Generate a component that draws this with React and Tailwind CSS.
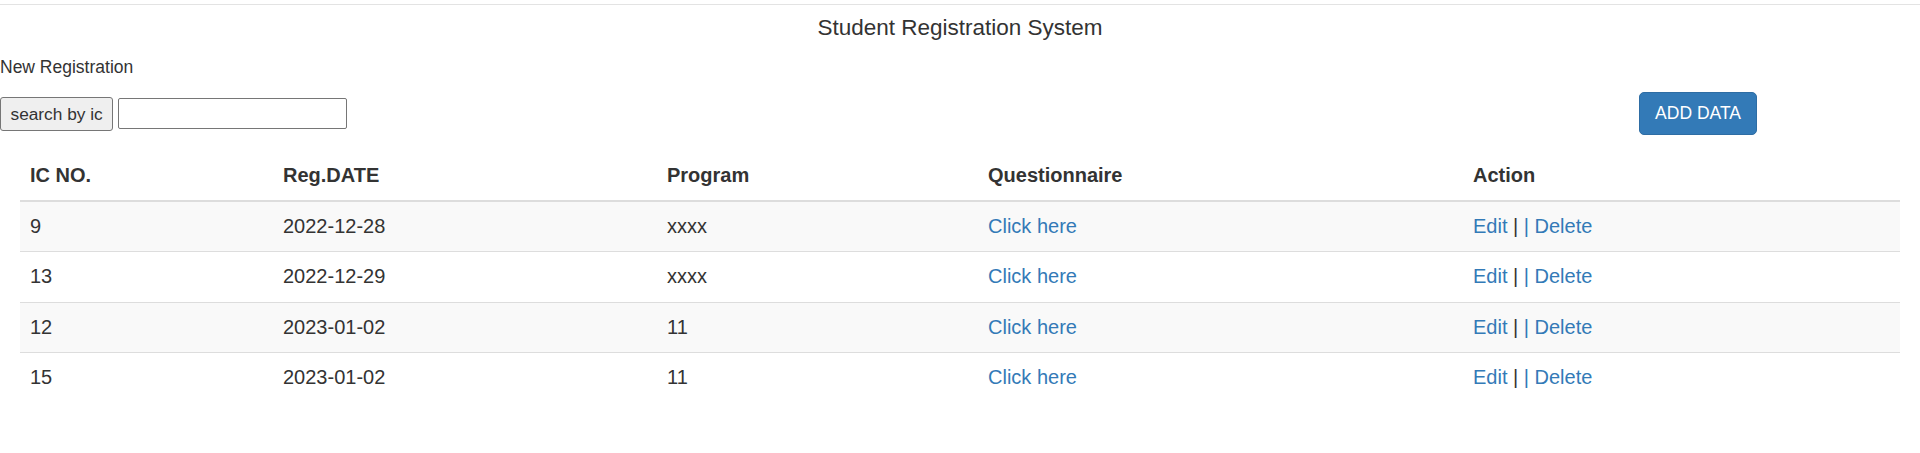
import React from 'react';

const rows = [
  { ic: '9', date: '2022-12-28', program: 'xxxx' },
  { ic: '13', date: '2022-12-29', program: 'xxxx' },
  { ic: '12', date: '2023-01-02', program: '11' },
  { ic: '15', date: '2023-01-02', program: '11' },
];

function App() {
  return (
    <div className="min-h-screen bg-white text-[#333] font-['Liberation_Sans',Arial,sans-serif]">
      <div className="pt-[4px]">
        <hr className="border-0 border-t border-[#e3e3e3]" />
      </div>

      <h3 className="mt-[10px] text-center text-[22.5px] leading-[25px]">Student Registration System</h3>

      <p className="mt-[15px] text-[17.5px] leading-[25px]">New Registration</p>

      <div className="mt-[12px] flex items-center">
        <button className="h-[34px] px-[9.5px] text-[17.3px] leading-[20px] bg-[#efefef] border border-[#767676] rounded-[3px]">
          search by ic
        </button>
        <input className="ml-[5px] h-[31px] w-[229px] px-1 border border-[#767676] rounded-[2px] bg-white" />
        <button className="ml-auto mr-[163px] h-[43px] px-[15px] text-[17.5px] leading-[25px] text-white bg-[#337ab7] border border-[#2e6da4] rounded-[5px]">
          ADD DATA
        </button>
      </div>

      <div className="mt-[16px] px-[20px]">
        <table className="w-full table-fixed border-collapse text-[20px] leading-[29.2px]">
          <colgroup>
            <col className="w-[253px]" />
            <col className="w-[384px]" />
            <col className="w-[321px]" />
            <col className="w-[485px]" />
            <col />
          </colgroup>
          <thead>
            <tr className="border-b-[2.5px] border-[#ddd]">
              <th className="p-[10px] text-left font-bold">IC NO.</th>
              <th className="p-[10px] text-left font-bold">Reg.DATE</th>
              <th className="p-[10px] text-left font-bold">Program</th>
              <th className="p-[10px] text-left font-bold">Questionnaire</th>
              <th className="p-[10px] text-left font-bold">Action</th>
            </tr>
          </thead>
          <tbody>
            {rows.map((r, i) => (
              <tr
                key={r.ic}
                className={(i % 2 === 0 ? 'bg-[#f9f9f9] ' : '') + (i < rows.length - 1 ? 'border-b border-[#ddd]' : '')}
              >
                <td className="p-[10px]">{r.ic}</td>
                <td className="p-[10px]">{r.date}</td>
                <td className="p-[10px]">{r.program}</td>
                <td className="p-[10px]">
                  <a href="#" className="text-[#337ab7]">Click here</a>
                </td>
                <td className="p-[10px]">
                  <a href="#" className="text-[#337ab7]">Edit</a> | <a href="#" className="text-[#337ab7]">| Delete</a>
                </td>
              </tr>
            ))}
          </tbody>
        </table>
      </div>
    </div>
  );
}

export default App;
